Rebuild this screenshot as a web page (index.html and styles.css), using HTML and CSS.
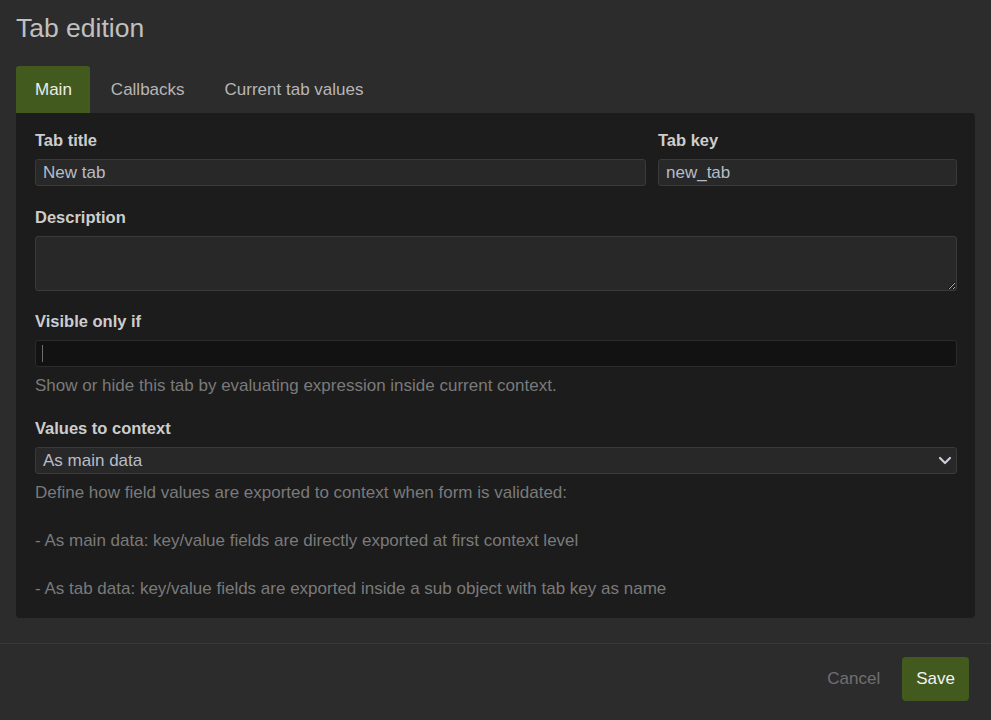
FILE: index.html
```html
<!DOCTYPE html>
<html>
<head>
<meta charset="utf-8">
<link rel="stylesheet" href="styles.css">
</head>
<body>
<div class="dialog">
  <div class="body">
    <h1 class="title">Tab edition</h1>
    <div class="tabs">
      <div class="tab active">Main</div>
      <div class="tab">Callbacks</div>
      <div class="tab">Current tab values</div>
    </div>
    <div class="panel">
      <div class="row">
        <div class="field wide">
          <label class="label">Tab title</label>
          <input class="input" type="text" value="New tab">
        </div>
        <div class="field narrow">
          <label class="label">Tab key</label>
          <input class="input" type="text" value="new_tab">
        </div>
      </div>
      <div class="field">
        <label class="label">Description</label>
        <textarea class="input textarea"></textarea>
      </div>
      <div class="field">
        <label class="label">Visible only if</label>
        <div class="input code"><span class="caret"></span></div>
        <div class="help">Show or hide this tab by evaluating expression inside current context.</div>
      </div>
      <div class="field last">
        <label class="label">Values to context</label>
        <div class="select">
          <span>As main data</span>
          <svg class="chev" width="14" height="9" viewBox="0 0 14 9"><path d="M2 2 L7 7 L12 2" fill="none" stroke="#c9ceda" stroke-width="2.2" stroke-linecap="round" stroke-linejoin="round"/></svg>
        </div>
        <div class="help">
          <div>Define how field values are exported to context when form is validated:</div>
          <div class="gap">- As main data: key/value fields are directly exported at first context level</div>
          <div class="gap">- As tab data: key/value fields are exported inside a sub object with tab key as name</div>
        </div>
      </div>
    </div>
  </div>
  <div class="footer">
    <button class="btn cancel">Cancel</button>
    <button class="btn save">Save</button>
  </div>
</div>
</body>
</html>
```

FILE: styles.css
```css
html, body {
  margin: 0;
  padding: 0;
  background: #2c2c2c;
  font-family: "Liberation Sans", Arial, Helvetica, sans-serif;
  font-size: 17px;
  color: #c8c8c8;
}

.dialog {
  width: 991px;
  height: 720px;
  display: flex;
  flex-direction: column;
}

.body {
  padding: 12px 16px 0;
  height: 630px;
  box-sizing: border-box;
}

.title {
  margin: 0;
  font-size: 26.5px;
  font-weight: normal;
  line-height: 32px;
  color: #c0c0c0;
}

.tabs {
  display: flex;
  margin-top: 22px;
}

.tab {
  height: 47px;
  line-height: 48px;
  padding: 0 19px 0 19px;
  margin-right: 2px;
  color: #b6b6b6;
  border-radius: 3px 3px 0 0;
}

.tab.active {
  background: #435a1e;
  color: #ececec;
  padding-right: 18px;
}

.panel {
  background: #1c1c1c;
  border-radius: 0 4px 4px 4px;
  padding: 15px 18px 17px 19px;
}

.row {
  display: grid;
  grid-template-columns: minmax(0, 1fr) 299px;
  column-gap: 12px;
}

.field {
  display: flex;
  flex-direction: column;
  margin-bottom: 18px;
}

.row .field {
  margin-bottom: 19px;
}

.field.last {
  margin-bottom: 0;
}

.label {
  font-weight: bold;
  font-size: 16.5px;
  line-height: 24px;
  color: #cdcdcd;
  margin-bottom: 7px;
}

.input {
  box-sizing: border-box;
  height: 27px;
  background: #282828;
  border: 1px solid #3a3a3a;
  border-radius: 3px;
  color: #b7bcc8;
  font-family: inherit;
  font-size: 17px;
  padding: 0 7px;
  outline: none;
  width: 100%;
  margin: 0;
}

.textarea {
  height: 55px;
  resize: vertical;
  display: block;
}

.code {
  background: #121212;
  border-color: #2c2c2c;
  display: flex;
  align-items: center;
  padding-left: 6px;
}

.caret {
  display: inline-block;
  width: 1px;
  height: 17px;
  background: #6e6e6e;
}

.help {
  margin-top: 7px;
  color: #7a7a7a;
  line-height: 24px;
}

.help .gap {
  margin-top: 24px;
}

.select {
  box-sizing: border-box;
  height: 27px;
  background: #282828;
  border: 1px solid #3a3a3a;
  border-radius: 3px;
  color: #b7bcc8;
  display: flex;
  align-items: center;
  justify-content: space-between;
  padding: 0 4px 0 7px;
}

.chev {
  display: block;
}

.footer {
  flex: 1;
  border-top: 1px solid #383838;
  margin-top: 13px;
  display: flex;
  justify-content: flex-end;
  align-items: flex-start;
  padding: 13px 22px 0 0;
}

.btn {
  font-family: inherit;
  font-size: 17px;
  border: none;
  background: transparent;
  height: 44px;
  border-radius: 4px;
  cursor: pointer;
}

.cancel {
  color: #707070;
  padding: 0 22px;
}

.save {
  background: #435a1e;
  color: #f2f2f2;
  padding: 0 14px;
}
```
